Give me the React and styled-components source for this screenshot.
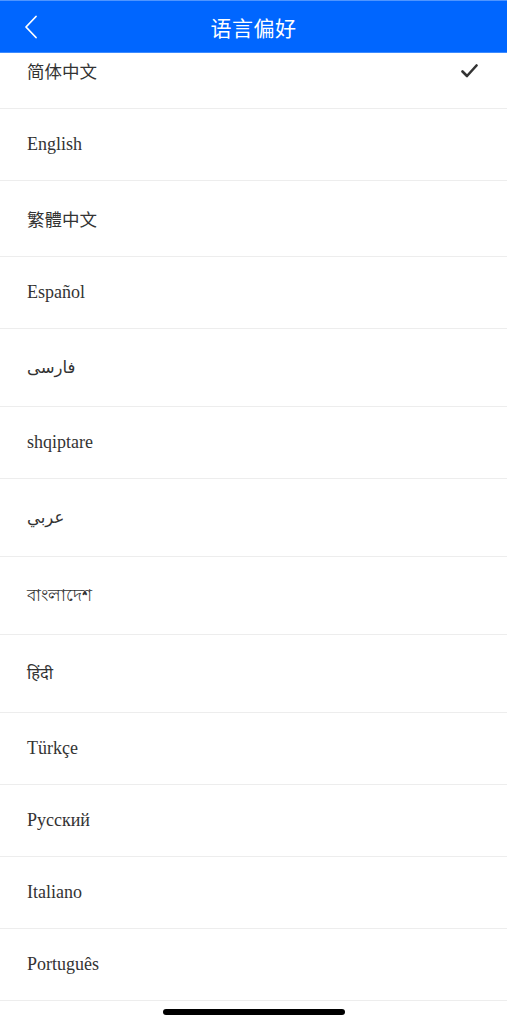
import React from 'react';
import styled, { createGlobalStyle } from 'styled-components';

const GlobalStyle = createGlobalStyle`
  html, body {
    margin: 0;
    padding: 0;
    background: #ffffff;
  }
  body {
    font-family: "Liberation Serif", "Noto Sans CJK SC", serif;
    -webkit-font-smoothing: antialiased;
  }
`;

const LANGUAGES = [
  { label: '简体中文', script: 'cjk', selected: true },
  { label: 'English', script: 'latin' },
  { label: '繁體中文', script: 'cjk' },
  { label: 'Español', script: 'latin' },
  { label: 'فارسی', script: 'complex' },
  { label: 'shqiptare', script: 'latin' },
  { label: 'عربي', script: 'complex' },
  { label: 'বাংলাদেশ', script: 'complex' },
  { label: 'हिंदी', script: 'complex' },
  { label: 'Türkçe', script: 'latin' },
  { label: 'Русский', script: 'latin' },
  { label: 'Italiano', script: 'latin' },
  { label: 'Português', script: 'latin' },
];

const LINE = { latin: '19px', cjk: '23px', complex: '25px' };
const FONT = {
  latin: '"Liberation Serif", "Times New Roman", serif',
  cjk: '"Noto Sans CJK SC", "Noto Sans", sans-serif',
  complex: '"DejaVu Sans", "Noto Sans", "Liberation Serif", sans-serif',
};

const Page = styled.div`
  width: 100%;
  min-height: 1024px;
  background: #ffffff;
  overflow: hidden;
`;

const Head = styled.header`
  position: relative;
  z-index: 2;
  display: flex;
  align-items: center;
  justify-content: center;
  height: 53px;
  box-sizing: border-box;
  background: #0066ff;
  border-top: 1px solid #4f95ff;
  border-bottom: 1px solid #3d8bff;
`;

const BackButton = styled.button`
  position: absolute;
  left: 14px;
  top: 50%;
  transform: translateY(-50%);
  display: flex;
  align-items: center;
  justify-content: center;
  width: 34px;
  height: 40px;
  padding: 0;
  background: none;
  border: none;
  cursor: pointer;
`;

const Title = styled.h1`
  margin: 0;
  color: #ffffff;
  font-family: "Noto Sans CJK SC", "Noto Sans", sans-serif;
  font-size: 21px;
  font-weight: 400;
  letter-spacing: 0.5px;
`;

const List = styled.ul`
  list-style: none;
  margin: -20px 0 0;
  padding: 0;
`;

const Row = styled.li`
  display: flex;
  align-items: center;
  justify-content: space-between;
  padding: 26px 29px 26px 27px;
  border-bottom: 1px solid #ededed;
  line-height: ${ (p) => LINE[p.$script] };
`;

const Label = styled.span`
  color: #333333;
  font-family: ${ (p) => FONT[p.$script] };
  font-size: ${ (p) => (p.$script === 'latin' ? '18px' : p.$script === 'cjk' ? '17.5px' : '16.5px') };
`;

const HomeBar = styled.div`
  position: fixed;
  left: 50%;
  bottom: 9px;
  width: 182px;
  height: 6px;
  margin-left: -91px;
  border-radius: 3px;
  background: #000000;
`;

const Chevron = () => (
  <svg width="14" height="24" viewBox="0 0 14 24" fill="none">
    <polyline points="12,1.5 2,12 12,22.5" stroke="#ffffff" strokeWidth="1.8"
      strokeLinecap="round" strokeLinejoin="round" />
  </svg>
);

const Check = () => (
  <svg width="17" height="14" viewBox="0 0 17 14" fill="none">
    <polyline points="1.5,7.5 6,12 15.5,1.5" stroke="#333333" strokeWidth="2.6"
      strokeLinecap="round" strokeLinejoin="round" />
  </svg>
);

export default function App() {
  return (
    <Page>
      <GlobalStyle />
      <Head>
        <BackButton aria-label="back">
          <Chevron />
        </BackButton>
        <Title>语言偏好</Title>
      </Head>
      <List>
        {
          LANGUAGES.map((lang) => (
            <Row key={ lang.label } $script={ lang.script }>
              <Label $script={ lang.script }>{ lang.label }</Label>
              { lang.selected && <Check /> }
            </Row>
          ))
        }
      </List>
      <HomeBar />
    </Page>
  );
}
